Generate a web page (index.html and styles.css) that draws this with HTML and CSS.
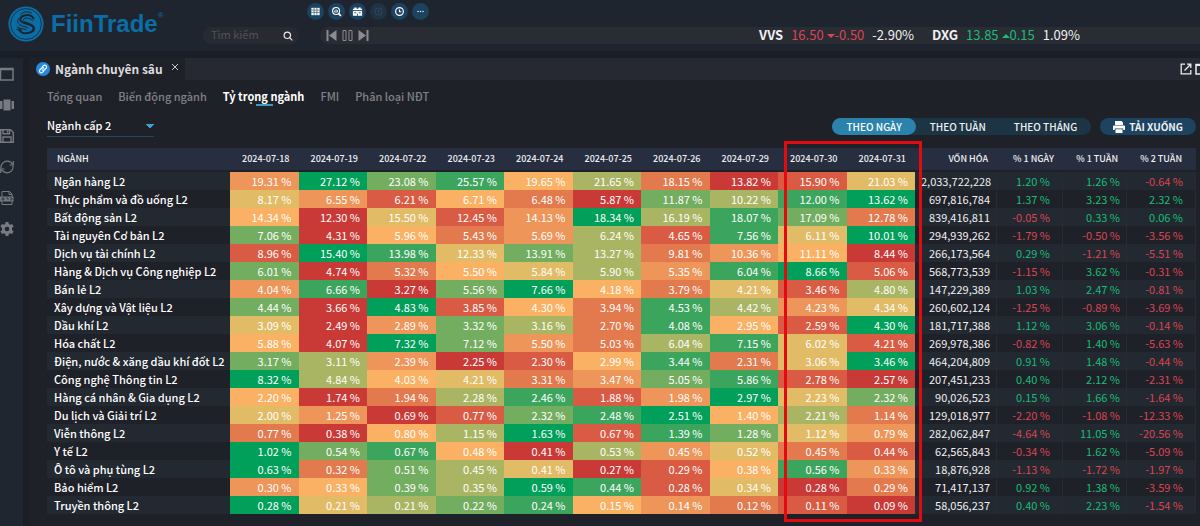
FILE: index.html
```html
<!DOCTYPE html>
<html lang="vi">
<head>
<meta charset="utf-8">
<title>FiinTrade - Ngành chuyên sâu</title>
<link rel="stylesheet" href="styles.css">
</head>
<body>
<header class="topbar">
  <a class="brand" href="#">
    <svg class="brand-mark" viewBox="0 0 36 36" aria-hidden="true">
      <circle cx="18" cy="18" r="17.6" fill="#0b6ea6"/>
      <circle cx="18" cy="18" r="15.4" fill="none" stroke="#1e252f" stroke-width=".8"/>
      <g fill="none" stroke="#1e252f" stroke-linecap="round">
        <path d="M25.500 12.500C24 9.500 20 8 16 9.500c-4.500 1.500-5 5.500-1 7l7.500 2.500c4.500 2 4 6-.5 7.500-4.500 1.300-9 .3-11-2.500" stroke-width="2"/>
        <path d="M24.500 14.500c-3-3-8-3-9-1-.8 1.700 2 2.500 4.500 3.300 5.500 2 8 4.500 6 8.200" stroke-width="1"/>
        <path d="M10.500 12.500c-2 3-.5 5.500 2.500 7 3 1.200 6 1.200 7 2.800M9 20.500c3 3 6 1.500 9 3.300M8.500 23.500c2-1 4-.5 5.500.5M12.500 8.500c3-3 7-3.500 11-1.500" stroke-width="1"/>
      </g>
    </svg>
    <span class="brand-name">FiinTrade</span><sup class="brand-reg">®</sup>
  </a>
  <nav class="quick" aria-label="Công cụ">
    <button class="quick-btn" aria-label="Bảng"><svg viewBox="0 0 12 12"><path d="M1.500 2h9v8h-9z" fill="#fff"/><path d="M1.500 4.500h9M1.500 7h9M4.500 2v8M7.500 2v8" stroke="#1d4a6b" stroke-width=".7"/></svg></button>
    <button class="quick-btn" aria-label="Tra cứu"><svg viewBox="0 0 12 12" fill="none" stroke="#fff"><circle cx="5.500" cy="5.500" r="3.800" stroke-width="1.200"/><path d="M8.300 8.300l2.500 2.500" stroke-width="1.800"/><path d="M4 7V5M5.500 7.500V3.500M7 7V4.500" stroke-width="1"/></svg></button>
    <button class="quick-btn" aria-label="Bộ lọc"><svg viewBox="0 0 12 12"><path d="M2.500 1.500h2.500v1.500h2V1.500h2.500V3h1.500v7.500H1V3h1.500z" fill="#fff"/><path d="M1 5h10M2.500 7.500h2.200M7.300 7.500h2.200M6 8.500v2" stroke="#1d4a6b"/></svg></button>
    <button class="quick-btn quick-off" aria-label="Tiền tệ" disabled><svg viewBox="0 0 12 12" fill="none" stroke="#39475a"><circle cx="6" cy="6" r="4"/><path d="M6 4v4"/></svg></button>
    <button class="quick-btn" aria-label="Lịch sử"><svg viewBox="0 0 12 12" fill="none" stroke="#fff" stroke-width="1.300"><circle cx="6" cy="6" r="4.200"/><path d="M6 3.800V6.300h2"/></svg></button>
    <button class="quick-btn" aria-label="Thêm"><svg viewBox="0 0 12 12" fill="#d5e2ec"><circle cx="3.300" cy="6" r=".9"/><circle cx="6" cy="6" r=".9"/><circle cx="8.700" cy="6" r=".9"/></svg></button>
  </nav>
  <form class="search">
    <input class="search-input" type="search" placeholder="Tìm kiếm" aria-label="Tìm kiếm">
    <button class="search-btn" type="button" aria-label="Tìm"><svg viewBox="0 0 10 10" fill="none" stroke="#e8e8ea" stroke-width="1.200"><circle cx="4.300" cy="4.300" r="3.200"/><path d="M6.700 6.700l2.600 2.600"/></svg></button>
  </form>
  <div class="ticker">
    <div class="player">
      <button class="player-btn" aria-label="Trước"><svg viewBox="0 0 11 11" fill="#8a8c92"><path d="M.5 0h2v11h-2zM10.500 0v11L3 5.500z"/></svg></button>
      <button class="player-btn" aria-label="Tạm dừng"><svg viewBox="0 0 11 11" fill="none" stroke="#8a8c92"><path d="M1 .5h3v10H1zM7 .5h3v10H7z"/></svg></button>
      <button class="player-btn" aria-label="Sau"><svg viewBox="0 0 11 11" fill="#8a8c92"><path d="M8.500 0h2v11h-2zM.5 0v11L8 5.500z"/></svg></button>
    </div>
    <div class="quotes">
      <div class="quote"><b>VVS</b><span class="down">16.50 <i class="tri tri-down"></i>-0.50</span><span>-2.90%</span></div>
      <div class="quote"><b>DXG</b><span class="up">13.85 <i class="tri tri-up"></i>0.15</span><span>1.09%</span></div>
    </div>
  </div>
</header>

<div class="workspace">
  <aside class="rail">
    <button class="rail-btn" aria-label="Cửa sổ"><svg viewBox="0 0 14 14" fill="none" stroke="#777a80"><path d="M.5 1.500h12.500v11.500H.5z" stroke-width="1.500"/><path d="M.5 2.300h12.500" stroke-width="2"/></svg></button>
    <button class="rail-btn" aria-label="Bố cục"><svg viewBox="0 0 14 14" fill="#777a80"><path d="M3.500 1.500h7v11h-7zM0 3h2.500v8H0zM11.500 3h2.500v8h-2.500z"/></svg></button>
    <button class="rail-btn" aria-label="Lưu"><svg viewBox="0 0 14 14" fill="none" stroke="#777a80" stroke-width="1.400"><path d="M.7.700h9.800l2.800 2.800v9.800H.7z"/><path d="M3 .7v4h6.500v-4M3 13V8h8v5M7.500 1.500v2"/></svg></button>
    <button class="rail-btn" aria-label="Làm mới"><svg viewBox="0 0 14 14" fill="none" stroke="#777a80" stroke-width="1.200"><path d="M1 8.500C.3 4 4 1 7.500 1.200c2.300.1 4 1.300 5.200 3.300M13 5.500c.7 4.500-2.500 7.500-6.200 7.300-2.300-.1-4.200-1.300-5.300-3.300"/><path d="M13.300 1v4H9.500M.7 13V9h3.800"/></svg></button>
    <button class="rail-btn" aria-label="Xuất tệp"><svg viewBox="0 0 14 14" fill="none" stroke="#777a80"><path d="M2 6V.5h7.500l2.500 2.500v3M9 .5v3h3M2 10v3.500h10V10"/><path d="M0 5.500h13.500v5H0z" fill="#777a80" stroke="none"/><path d="M2 7h2v2H2zM6 7h2v2M10 7h2v2h-2" stroke="#1f262f" stroke-width=".7"/></svg></button>
    <button class="rail-btn" aria-label="Cài đặt"><svg viewBox="0 0 14 14"><path fill="#777a80" fill-rule="evenodd" d="M5.600 0h2.800l.4 2 1.300.7 2-.7 1.500 2.500-1.600 1.400v2.200l1.600 1.400-1.500 2.500-2-.7-1.300.7-.4 2H5.600l-.4-2-1.300-.7-2 .7L.4 9.500 2 8.100V5.900L.4 4.500 1.900 2l2 .7L5.200 2zM7 4.700a2.300 2.300 0 100 4.600 2.300 2.300 0 000-4.600z"/></svg></button>
  </aside>

  <main class="panel">
    <div class="tabstrip">
      <div class="tab">
        <svg class="tab-icon" viewBox="0 0 14 14"><circle cx="7" cy="7" r="7" fill="#2489e0"/><g fill="none" stroke="#fff" stroke-width="1.200" stroke-linecap="round"><path d="M6.300 4.800l1.200-1.200c1.700-1.400 4 .7 2.700 2.500L8.500 7.800c-.8.700-1.800.6-2.300 0"/><path d="M7.700 9.200l-1.200 1.200c-1.700 1.400-4-.7-2.700-2.500l1.700-1.700c.8-.7 1.800-.6 2.300 0"/></g></svg>
        <span class="tab-title">Ngành chuyên sâu</span>
        <button class="tab-close" aria-label="Đóng"><svg viewBox="0 0 8 8" stroke="#c8c9cc" fill="none"><path d="M1 1l6 6M7 1L1 7"/></svg></button>
      </div>
      <div class="window-tools">
        <button class="window-btn" aria-label="Mở cửa sổ mới"><svg viewBox="0 0 12 12" fill="none" stroke="#eee" stroke-width="1.300"><path d="M5 1.200H1.200v9.600h9.600V7M7 1.200h3.800V5M10.500 1.500L4.500 7.500"/></svg></button>
        <button class="window-btn" aria-label="Phóng to"><svg viewBox="0 0 12 12" fill="none" stroke="#eee" stroke-width="1.500"><path d="M1 1.500h10v9.500H1z"/><path d="M1 2h10" stroke-width="2"/></svg></button>
      </div>
    </div>

    <nav class="subtabs">
      <a class="subtab" href="#">Tổng quan</a>
      <a class="subtab" href="#">Biến động ngành</a>
      <a class="subtab subtab-active" href="#" aria-current="page">Tỷ trọng ngành</a>
      <a class="subtab" href="#">FMI</a>
      <a class="subtab" href="#">Phân loại NĐT</a>
    </nav>

    <div class="controls">
      <select class="level" aria-label="Cấp ngành"><option>Ngành cấp 2</option></select>
      <div class="actions">
        <div class="period" role="group" aria-label="Chu kỳ">
          <button class="period-btn period-on">THEO NGÀY</button>
          <button class="period-btn">THEO TUẦN</button>
          <button class="period-btn">THEO THÁNG</button>
        </div>
        <button class="download"><svg viewBox="0 0 12 12" fill="#fff"><path d="M3 0h5.500L10 1.500V4H2V0zM1 4.500h10c.6 0 1 .4 1 1V9h-1.700V7.500H1.700V9H0V5.500c0-.6.4-1 1-1zM2.500 8.300h7V12h-7z"/></svg>TẢI XUỐNG</button>
      </div>
    </div>

    <div class="sheet">
      <table class="grid">
        <colgroup><col class="col-name"><col span="10"><col class="col-cap"><col class="col-day"><col class="col-week"><col class="col-week2"></colgroup>
        <thead>
          <tr>
            <th class="head-name" scope="col">NGÀNH</th>
            <th scope="col">2024-07-18</th><th scope="col">2024-07-19</th><th scope="col">2024-07-22</th><th scope="col">2024-07-23</th><th scope="col">2024-07-24</th>
            <th scope="col">2024-07-25</th><th scope="col">2024-07-26</th><th scope="col">2024-07-29</th><th scope="col">2024-07-30</th><th scope="col">2024-07-31</th>
            <th scope="col">VỐN HÓA</th><th scope="col">% 1 NGÀY</th><th scope="col">% 1 TUẦN</th><th class="head-last" scope="col">% 2 TUẦN</th>
          </tr>
        </thead>
        <tbody id="rows"></tbody>
      </table>
      <div class="highlight"></div>
    </div>
  </main>
</div>
<script src="table.js"></script>
</body>
</html>
```
FILE: styles.css
```css
* { box-sizing: border-box; }
body {
  margin: 0;
  min-height: 100vh;
  display: flex;
  flex-direction: column;
  overflow: hidden;
  background: #1a1e27;
  color: #f0f0f2;
  font-family: "Noto Sans CJK SC", "Noto Sans", sans-serif;
  font-size: 11px;
}
button, input, select { font: inherit; color: inherit; border: 0; background: none; padding: 0; margin: 0; }
button { display: inline-flex; align-items: center; justify-content: center; }
a { color: inherit; text-decoration: none; }
svg { display: block; flex: none; }

.topbar {
  display: grid;
  grid-template-columns: 195px 96px 1fr;
  grid-template-rows: 17px 17px;
  row-gap: 7px;
  column-gap: 8px;
  padding: 3px 0 7px;
  background: #1e252f;
}
.brand { grid-row: 1 / 3; display: flex; align-items: center; padding-left: 8px; color: #0b6ea6; }
.brand-mark { width: 36px; height: 36px; margin-right: 7px; }
.brand-name { font: bold 24px/36px "Liberation Sans", Arial, sans-serif; }
.brand-reg { align-self: flex-start; font: 8px/26px "Liberation Sans", Arial, sans-serif; }
.quick { grid-column: 3; display: flex; gap: 4px; }
.quick-btn { width: 17px; height: 17px; border-radius: 50%; background: #1d4260; }
.quick-btn svg { width: 11px; height: 11px; }
.quick-off { background: #1e3345; }
.search { grid-column: 2; grid-row: 2; display: flex; align-items: center; margin: 0; padding: 0 6px 0 8px; border-radius: 9px; background: #282a32; }
.search-input { flex: 1; min-width: 0; height: 17px; padding-bottom: 3px; outline: 0; appearance: none; }
.search-input::placeholder { color: #505259; opacity: 1; }
.search-btn svg { width: 10px; height: 10px; }
.ticker { grid-column: 3; grid-row: 2; display: flex; justify-content: space-between; align-items: center; margin-left: 13px; padding: 0 120px 0 6px; border-radius: 9px 0 0 9px; background: #2a2c34; }
.player { display: flex; gap: 5px; }
.player-btn svg { width: 11px; height: 11px; }
.quotes { display: flex; gap: 18px; padding-bottom: 2px; font-size: 13px; line-height: 15px; }
.quote { display: flex; gap: 8px; }
.up { color: #19bd7a; }
.down { color: #d94553; }
.tri { display: inline-block; vertical-align: middle; border: 4px solid transparent; }
.tri-down { border-top-color: currentColor; border-bottom: 0; }
.tri-up { border-bottom-color: currentColor; border-top: 0; }

.workspace { flex: 1; display: flex; gap: 6px; padding-top: 7px; }
.rail { width: 23px; padding-top: 9px; display: flex; flex-direction: column; gap: 17px; background: #1f262f; }
.rail-btn { justify-content: flex-start; }
.rail-btn svg { width: 14px; height: 14px; }
.panel { flex: 1; min-width: 0; background: #1f2128; }
.tabstrip { display: flex; justify-content: space-between; height: 22px; background: #262931; }
.tab { display: flex; align-items: center; padding: 0 6px 0 7px; background: #1f2128; }
.tab-icon { width: 14px; height: 14px; margin-right: 5px; }
.tab-title { font-size: 12px; font-weight: bold; line-height: 22px; color: #dcdcdf; }
.tab-close { align-self: flex-start; margin: 5px 0 0 8px; }
.tab-close svg { width: 8px; height: 8px; }
.window-tools { display: flex; align-items: center; gap: 3px; margin-right: -7px; }
.window-btn svg { width: 12px; height: 12px; }

.subtabs { display: flex; gap: 16px; padding: 6px 0 0 18px; line-height: 20px; font-weight: 500; color: #7f8187; }
.subtab { position: relative; }
.subtab-active { color: #fff; font-weight: bold; }
.subtab-active::after { content: ""; position: absolute; left: 50%; bottom: 0; width: 17px; height: 2px; margin-left: -8px; background: #3c9cc4; }

.controls { display: flex; justify-content: space-between; align-items: flex-start; padding: 10px 4px 0 18px; }
.level {
  width: 107px; height: 21px; padding: 0 0 2px; appearance: none;
  border-bottom: 1px solid #23485e; font-weight: 500; color: #fff;
  background:
    linear-gradient(to top right, transparent 50%, #3ba3d0 50%) right 4px top 8px / 4px 4px no-repeat,
    linear-gradient(to top left, transparent 50%, #3ba3d0 50%) right 0 top 8px / 4px 4px no-repeat;
}
.actions { display: flex; gap: 9px; padding-top: 2px; font-size: 10px; font-weight: 500; line-height: 17px; }
.period { display: flex; border-radius: 9px; background: #1d3444; }
.period-btn { height: 17px; padding: 0 14px; border-radius: 9px; }
.period-on { background: #2b83ac; color: #fff; }
.download { height: 17px; padding: 0 13px; gap: 4px; border-radius: 9px; background: #1c4360; font-weight: bold; }
.download svg { width: 12px; height: 12px; }

.sheet { position: relative; margin: 11px 4px 0 18px; }
.grid { width: 100%; table-layout: fixed; border-collapse: separate; border-spacing: 0; }
.col-name { width: 183px; }
.col-cap { width: 82px; }
.col-day { width: 66px; }
.col-week { width: 64px; }
.col-week2 { width: 69px; }
.grid th, .grid td { padding: 0 7px; text-align: right; white-space: nowrap; }
.grid thead th { height: 22px; padding: 0 9px; line-height: 22px; font-size: 9px; font-weight: 500; background: #262e3f; }
.grid thead .head-name { padding-left: 10px; text-align: left; }
.grid thead .head-last { padding-right: 14px; }
.grid tbody { line-height: 18px; }
.grid tbody::before { content: ""; display: table-row; height: 2px; }
.grid tbody th { text-align: left; font-weight: 500; color: #fff; }
.grid tbody tr:nth-child(odd) { background: #222930; }
.grid .num { padding: 0 6px; border-right: 1px solid #272b33; }
.grid .day, .grid .week2 { padding-right: 12px; }
.grid .heat { color: #fff; }
.r0 { background: #c93a37; }
.r1 { background: #d95b43; }
.r2 { background: #e27a4e; }
.r3 { background: #ee9559; }
.r4 { background: #fab163; }
.r5 { background: #e1bb66; }
.r6 { background: #a9b563; }
.r7 { background: #73ad60; }
.r8 { background: #3ca55d; }
.r9 { background: #009f5a; }
.highlight { position: absolute; top: -7px; bottom: -8px; right: 274px; width: 138px; border: 3px solid #e30b0f; pointer-events: none; }
```
FILE: table.js
```js
// name | ten daily shares | market cap | change 1 day, 1 week, 2 weeks
const data = `Ngân hàng L2|19.31 27.12 23.08 25.57 19.65 21.65 18.15 13.82 15.90 21.03|2,033,722,228|1.20 1.26 -0.64
Thực phẩm và đồ uống L2|8.17 6.55 6.21 6.71 6.48 5.87 11.87 10.22 12.00 13.62|697,816,784|1.37 3.23 2.32
Bất động sản L2|14.34 12.30 15.50 12.45 14.13 18.34 16.19 18.07 17.09 12.78|839,416,811|-0.05 0.33 0.06
Tài nguyên Cơ bản L2|7.06 4.31 5.96 5.43 5.69 6.24 4.65 7.56 6.11 10.01|294,939,262|-1.79 -0.50 -3.56
Dịch vụ tài chính L2|8.96 15.40 13.98 12.33 13.91 13.27 9.81 10.36 11.11 8.44|266,173,564|0.29 -1.21 -5.51
Hàng & Dịch vụ Công nghiệp L2|6.01 4.74 5.32 5.50 5.84 5.90 5.35 6.04 8.66 5.06|568,773,539|-1.15 3.62 -0.31
Bán lẻ L2|4.04 6.66 3.27 5.56 7.66 4.18 3.79 4.21 3.46 4.80|147,229,389|1.03 2.47 -0.81
Xây dựng và Vật liệu L2|4.44 3.66 4.83 3.85 4.30 3.94 4.53 4.42 4.23 4.34|260,602,124|-1.25 -0.89 -3.69
Dầu khí L2|3.09 2.49 2.89 3.32 3.16 2.70 4.08 2.95 2.59 4.30|181,717,388|1.12 3.06 -0.14
Hóa chất L2|5.88 4.07 7.32 7.12 5.50 5.03 6.04 7.15 6.02 4.21|269,978,386|-0.82 1.40 -5.63
Điện, nước & xăng dầu khí đốt L2|3.17 3.11 2.39 2.25 2.30 2.99 3.44 2.31 3.06 3.46|464,204,809|0.91 1.48 -0.44
Công nghệ Thông tin L2|8.32 4.84 4.03 4.21 3.31 3.47 5.05 5.86 2.78 2.57|207,451,233|0.40 2.12 -2.31
Hàng cá nhân & Gia dụng L2|2.20 1.74 1.94 2.28 2.46 1.88 1.98 2.97 2.23 2.32|90,026,523|0.15 1.66 -1.64
Du lịch và Giải trí L2|2.00 1.25 0.69 0.77 2.32 2.48 2.51 1.40 2.21 1.14|129,018,977|-2.20 -1.08 -12.33
Viễn thông L2|0.77 0.38 0.80 1.15 1.63 0.67 1.39 1.28 1.12 0.79|282,062,847|-4.64 11.05 -20.56
Y tế L2|1.02 0.54 0.67 0.48 0.41 0.53 0.453 0.52 0.451 0.44|62,565,843|-0.34 1.62 -5.09
Ô tô và phụ tùng L2|0.63 0.32 0.51 0.45 0.41 0.27 0.29 0.38 0.56 0.33|18,876,928|-1.13 -1.72 -1.97
Bảo hiểm L2|0.30 0.33 0.39 0.35 0.59 0.44 0.281 0.34 0.279 0.29|71,417,137|0.92 1.38 -3.59
Truyền thông L2|0.28 0.211 0.213 0.22 0.24 0.15 0.14 0.12 0.11 0.09|58,056,237|0.40 2.23 -1.54`;

const body = document.getElementById("rows");
const changeColumns = ["day", "week", "week2"];

function addCell(row, tag, text, className) {
  const cell = document.createElement(tag);
  cell.textContent = text;
  if (className) cell.className = className;
  row.append(cell);
  return cell;
}

for (const line of data.split("\n")) {
  const [name, shares, cap, changes] = line.split("|");
  const row = document.createElement("tr");
  addCell(row, "th", name).scope = "row";

  // Each share is coloured by its rank among the ten days of its row.
  const values = shares.split(" ").map(Number);
  const order = [...values].sort((a, b) => a - b);
  for (const v of values) addCell(row, "td", v.toFixed(2) + " %", "heat r" + order.indexOf(v));

  addCell(row, "td", cap, "num");
  changes.split(" ").forEach((c, i) => {
    addCell(row, "td", c + " %", "num " + changeColumns[i] + (c < 0 ? " down" : " up"));
  });
  body.append(row);
}
```
